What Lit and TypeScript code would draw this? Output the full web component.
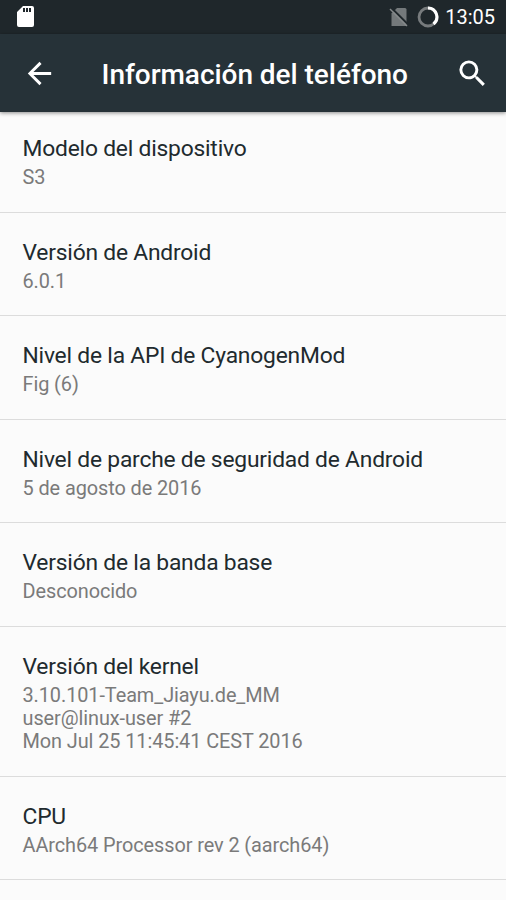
import { LitElement, html, css } from "lit";
import { customElement } from "lit/decorators.js";

interface Entry { title: string; lines: string[]; }

const ENTRIES: Entry[] = [
  { title: "Modelo del dispositivo", lines: ["S3"] },
  { title: "Versión de Android", lines: ["6.0.1"] },
  { title: "Nivel de la API de CyanogenMod", lines: ["Fig (6)"] },
  { title: "Nivel de parche de seguridad de Android", lines: ["5 de agosto de 2016"] },
  { title: "Versión de la banda base", lines: ["Desconocido"] },
  { title: "Versión del kernel", lines: ["3.10.101-Team_Jiayu.de_MM", "user@linux-user #2", "Mon Jul 25 11:45:41 CEST 2016"] },
  { title: "CPU", lines: ["AArch64 Processor rev 2 (aarch64)"] },
];

@customElement("app-root")
export class AppRoot extends LitElement {
  static styles = css`
    :host { display: flex; flex-direction: column; width: 506px; height: 900px; overflow: hidden; background: #fbfbfb; font-family: Roboto, sans-serif; }
    svg { display: block; flex: none; }
    .status { box-sizing: border-box; height: 34px; flex: none; background: #1f272b; display: flex; align-items: center; padding: 0 11px 0 17px; color: #fff; }
    .space { flex: 1; }
    .card { margin-bottom: 1px; }
    .sim { margin-right: 8px; }
    .ring { margin: 0 6px 1px 0; }
    .clock { font-size: 20px; line-height: 34px; }
    .bar { box-sizing: border-box; height: 78px; flex: none; background: #263238; display: flex; align-items: center; padding: 0 16px 0 22px; box-shadow: 0 1px 4px rgba(0,0,0,.45); z-index: 1; color: #fff; }
    .bar h1 { flex: 1; margin: 3px 0 0 44.500px; font-size: 28px; letter-spacing: -.04px; font-weight: 500; line-height: 34px; white-space: nowrap; }
    .list { flex: 1; margin-top: -3px; }
    .entry { border-bottom: 1px solid #dcdcdc; padding: 25px 22.5px 1px; height: 76.6px; }
    .entry.tall { height: 122.6px; }
    .title { font-size: 22.8px; letter-spacing: -.2px; line-height: 29px; color: #212a2e; white-space: nowrap; margin-bottom: 3px; }
    .line { font-size: 19.9px; letter-spacing: -.08px; line-height: 23px; color: #7a7a7a; white-space: nowrap; }
  `;

  render() {
    return html`
      <div class="status">
        <svg class="card" width="17" height="21" viewBox="0 0 17 21"><path fill="#fff" fill-rule="evenodd" d="M6 0h9a2 2 0 0 1 2 2v17a2 2 0 0 1-2 2H2a2 2 0 0 1-2-2V6zM6 2v4h2V2zm3 0v4h2V2zm3 0v4h2V2z"/></svg>
        <div class="space"></div>
        <svg class="sim" width="20" height="20" viewBox="0 0 20 20"><path fill="#74797b" d="M8 1h8q1.500 0 1.500 1.500V19h-15V6.500z"/><path d="M2.500 1l18 18" stroke="#1f272b" stroke-width="2"/><path d="M1 2l17 17" stroke="#858a8b" stroke-width="1.500"/></svg>
        <svg class="ring" width="22" height="22" viewBox="0 0 22 22"><circle cx="11" cy="11" r="9" fill="none" stroke="#777b7d" stroke-width="2.800"/><path d="M11 2a9 9 0 0 1 5.500 16" fill="none" stroke="#fff" stroke-width="3"/></svg>
        <span class="clock">13:05</span>
      </div>
      <div class="bar">
        <svg width="35" height="35" viewBox="0 0 24 24"><path fill="#fff" d="M20 11H7.830l5.590-5.590L12 4l-8 8 8 8 1.410-1.410L7.830 13H20v-2z"/></svg>
        <h1>Información del teléfono</h1>
        <svg width="35" height="35" viewBox="0 0 24 24"><path fill="#fff" d="M15.500 14h-.790l-.280-.270A6.470 6.470 0 0 0 16 9.500 6.500 6.500 0 1 0 9.500 16c1.610 0 3.090-.590 4.230-1.570l.270.280v.790l5 4.990L20.490 19zm-6 0a4.500 4.500 0 1 1 0-9 4.500 4.500 0 0 1 0 9z"/></svg>
      </div>
      <div class="list">
        ${ENTRIES.map((e) => html`<div class="entry ${e.lines.length > 1 ? "tall" : ""}">
          <div class="title">${e.title}</div>
          ${e.lines.map((l) => html`<div class="line">${l}</div>`)}
        </div>`)}
      </div>
    `;
  }
}
